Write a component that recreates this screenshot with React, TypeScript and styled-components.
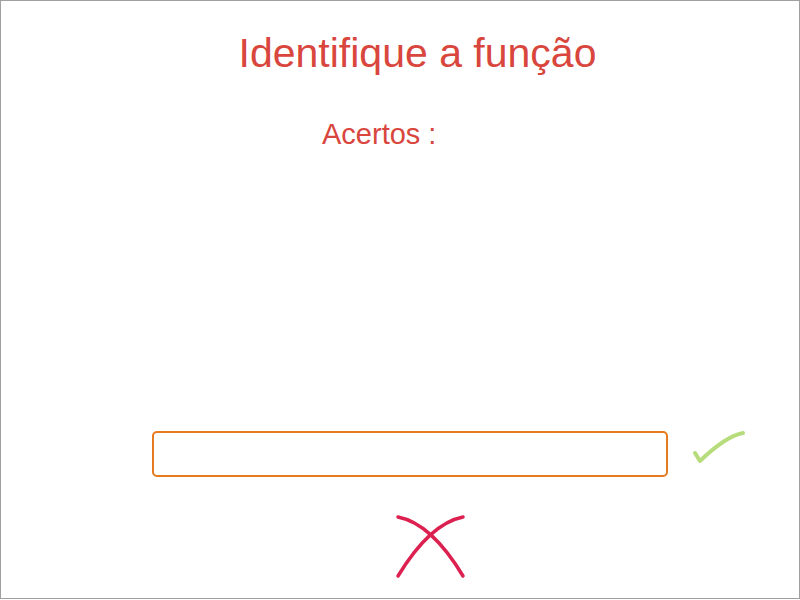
import React from "react";
import styled, { createGlobalStyle } from "styled-components";

const Global = createGlobalStyle`
  html, body { margin: 0; padding: 0; background: #ffffff; }
  body { font-family: "Liberation Sans", Arial, sans-serif; }
`;

const Frame = styled.div`
  box-sizing: border-box;
  width: 800px;
  height: 599px;
  border: 1px solid #a0a0a0;
  display: flex;
  flex-direction: column;
  align-items: stretch;
`;

const Title = styled.h1`
  margin: 32px 0 0 0;
  padding-left: 35px;
  text-align: center;
  font-size: 41px;
  line-height: 41px;
  font-weight: 400;
  color: #d9463d;
`;

const Score = styled.div`
  margin: 46px 0 0 321px;
  font-size: 29px;
  line-height: 29px;
  color: #d9463d;
`;

const AnswerRow = styled.div`
  margin: 282px 0 0 151px;
  display: flex;
  align-items: flex-start;
  gap: 22px;
`;

const AnswerInput = styled.input`
  box-sizing: border-box;
  width: 516px;
  height: 46px;
  border: 2px solid #e67a1e;
  border-radius: 5px;
  outline: none;
  background: #fff;
  font-family: "Liberation Sans", Arial, sans-serif;
  font-size: 20px;
  padding: 0 10px;
`;

const IconButton = styled.button`
  border: none;
  background: none;
  padding: 0;
  margin: 0;
  display: block;
  cursor: pointer;
`;

const CheckWrap = styled(IconButton)`
  margin-top: -3px;
`;

const CloseRow = styled.div`
  margin: 36px 0 0 393px;
  display: flex;
`;

export default function App() {
  return (
    <>
      <Global />
      <Frame>
        <Title>Identifique a função</Title>
        <Score>Acertos :</Score>
        <AnswerRow>
          <AnswerInput type="text" />
          <CheckWrap aria-label="confirmar">
            <svg width="58" height="40" viewBox="0 0 58 40">
              <path
                d="M5 25 L10 33 Q36 8 53 5"
                fill="none"
                stroke="#b7dc7b"
                strokeWidth="4"
                strokeLinecap="round"
                strokeLinejoin="round"
              />
            </svg>
          </CheckWrap>
        </AnswerRow>
        <CloseRow>
          <IconButton aria-label="cancelar">
            <svg width="74" height="66" viewBox="0 0 74 66">
              <path
                d="M4 4 Q37.5 10.5 69 63 M69 4 Q36 10.5 4 63"
                fill="none"
                stroke="#dc2050"
                strokeWidth="3.5"
                strokeLinecap="round"
              />
            </svg>
          </IconButton>
        </CloseRow>
      </Frame>
    </>
  );
}
